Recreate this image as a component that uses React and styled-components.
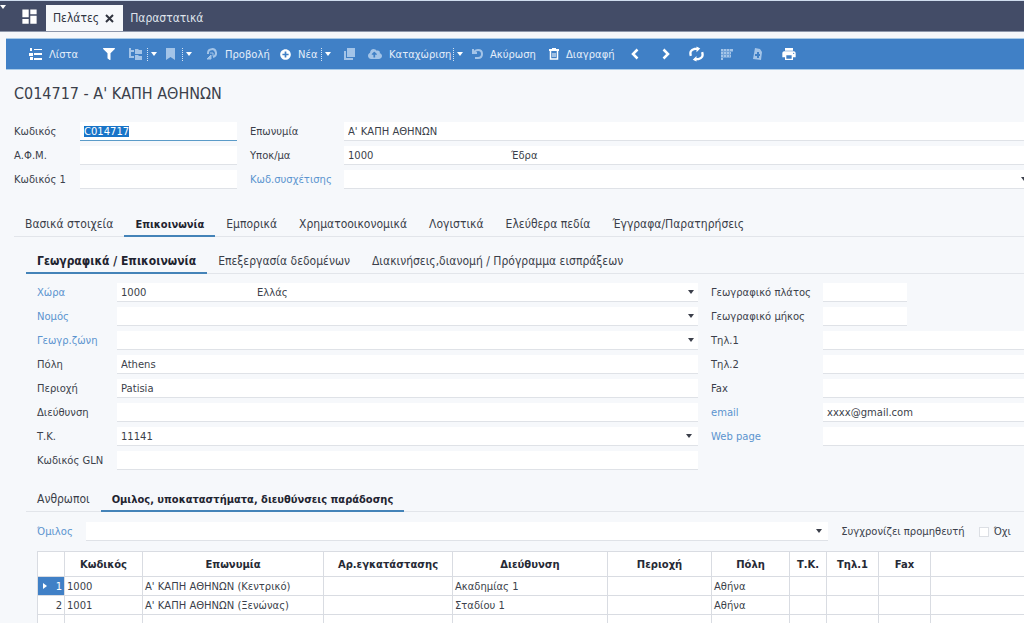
import React, {useEffect, useRef} from 'react';
import styled, {createGlobalStyle, css} from 'styled-components';
import {MdDashboard, MdPrint} from 'react-icons/md';
import {FaFilter, FaPlusCircle, FaCloudUploadAlt} from 'react-icons/fa';

const GlobalStyle = createGlobalStyle`
  * {
    box-sizing: border-box;
  }

  body {
    margin: 0;
    overflow: hidden;
    background: #f6f8fb;
    color: #3b3f4a;
    font-family: "DejaVu Sans", Verdana, sans-serif;
    font-size: 10px;
  }

  button, input, select {
    margin: 0;
    padding: 0;
    border: 0;
    border-radius: 0;
    background: transparent;
    color: inherit;
    font: inherit;
    outline: none;
  }
`;

const Page = styled.div`
  height: 100vh;
  overflow: hidden;
  border-top: 1px solid #cfdcee;
`;

const TopBar = styled.header`
  display: flex;
  align-items: flex-end;
  height: 31px;
  background: #434c67;
  border-bottom: 1px solid #8d97ab;
`;

const MenuCorner = styled.button`
  align-self: flex-start;
  display: flex;
  width: 20px;
  padding-top: 4px;
  color: white;
`;

const HomeButton = styled.button`
  display: flex;
  align-items: center;
  width: 26px;
  height: 30px;
  color: white;
`;

const WindowTab = styled.button`
  display: flex;
  align-items: center;
  gap: 6px;
  height: 26px;
  padding: 0 9px 0 7px;
  font-family: "DejaVu Sans Condensed", "DejaVu Sans", sans-serif;
  font-size: 12px;
  color: ${({$active}) => ($active ? '#30343f' : '#dfe3ec')};
  background: ${({$active}) => ($active ? '#f6f8fb' : 'transparent')};
`;

const Toolbar = styled.div`
  display: flex;
  align-items: center;
  height: 32px;
  margin: 6px 0 0 6px;
  padding-left: 23px;
  background: #4080c6;
  border: solid #a9cbe8;
  border-width: 1px 0;
`;

const ToolButton = styled.button`
  display: flex;
  align-items: center;
  gap: 7px;
  flex: 0 0 ${({$width}) => $width}px;
  height: 30px;
  color: #e4eefa;
  white-space: nowrap;

  svg {
    flex: none;
    color: ${({$dim}) => ($dim ? '#a3c4e8' : 'white')};
  }
`;

const SplitButton = styled.button`
  display: flex;
  align-items: center;
  flex: 0 0 ${({$width}) => $width}px;
  height: 13px;
  padding-left: 3px;
  border-left: 1px dotted #d3e3f4;
  color: white;
`;

const Title = styled.h1`
  margin: 14px 14px 18px;
  font-family: "DejaVu Sans Condensed", "DejaVu Sans", sans-serif;
  font-size: 16px;
  line-height: 20px;
  font-weight: normal;
`;

const HeadForm = styled.div`
  display: grid;
  grid-template-columns: 223px 1fr;
  column-gap: 13px;
  padding-left: 14px;
`;

const FieldColumn = styled.div`
  display: flex;
  flex-direction: column;
  gap: 5px;
  min-width: 0;
`;

const FieldRow = styled.div`
  display: grid;
  grid-template-columns: ${({$label}) => $label}px ${({$width}) => ($width ? `${$width}px` : '1fr')};
  align-items: center;
  height: 19px;
`;

const Label = styled.label`
  white-space: nowrap;
  color: ${({$link}) => ($link ? '#5b94cf' : '#3b3f4a')};
`;

const fieldBox = css`
  width: 100%;
  min-width: 0;
  height: 19px;
  padding: 0 4px;
  background: white;
  border-bottom: 1px solid #dfe2e7;
`;

const TextInput = styled.input`
  ${fieldBox}

  &:focus {
    border-bottom-color: #5b9bc8;
  }

  &::selection {
    background: #1874c8;
    color: white;
  }
`;

const Combo = styled.div`
  position: relative;
  min-width: 0;
  flex: 1;

  svg {
    position: absolute;
    top: 7px;
    right: ${({$arrow}) => $arrow}px;
    pointer-events: none;
  }
`;

const Select = styled.select`
  ${fieldBox}
  display: block;
  appearance: none;
`;

const Description = styled.span`
  position: absolute;
  top: 0;
  left: ${({$left}) => $left}px;
  line-height: 19px;
  pointer-events: none;
`;

const Tabs = styled.div`
  display: flex;
  height: 24px;
  margin-top: ${({$top}) => $top}px;
  margin-left: ${({$left}) => $left}px;
  border-bottom: 1px solid #e2e5ea;
`;

const Tab = styled.button`
  height: 24px;
  padding: 0 11px;
  border-bottom: 2px solid ${({$active}) => ($active ? '#4483b8' : 'transparent')};
  font-family: "DejaVu Sans Condensed", "DejaVu Sans", sans-serif;
  font-size: ${({$compact}) => ($compact ? 11 : 12)}px;
  font-weight: ${({$active}) => ($active ? 'bold' : 'normal')};
  color: ${({$active}) => ($active ? '#1f2430' : '#3b3f4a')};
  white-space: nowrap;
`;

const ContactForm = styled.div`
  display: grid;
  grid-template-columns: 661px 1fr;
  column-gap: 13px;
  margin-top: 9px;
  padding-left: 37px;
`;

const GroupRow = styled.div`
  display: flex;
  align-items: center;
  margin-top: 10px;
  padding: 0 13px 0 37px;
`;

const GroupLabel = styled(Label)`
  width: 49px;
`;

const SyncLabel = styled.span`
  margin: 0 14px 0 13px;
`;

const CheckLabel = styled.label`
  display: flex;
  align-items: center;
  gap: 5px;
`;

const Checkbox = styled.input`
  appearance: none;
  width: 10px;
  height: 10px;
  background: white;
  border: 1px solid #dcdfe4;
`;

const Table = styled.table`
  width: calc(100% - 37px);
  margin: 10px 0 0 37px;
  border-collapse: collapse;
  table-layout: fixed;
  background: white;

  th, td {
    border: 1px solid #d9dce2;
    white-space: nowrap;
    overflow: hidden;
  }

  th:last-child, td:last-child {
    border-right: 0;
  }

  th {
    height: 25px;
    padding: 0;
    color: #262a35;
  }

  td {
    height: 19px;
    padding: 0 2px;
  }
`;

const RowNumber = styled.td`
  text-align: right;
  color: ${({$selected}) => ($selected ? 'white' : '#3b3f4a')};
  background: ${({$selected}) => ($selected ? '#4080c6' : 'white')};
`;

const NumberBox = styled.div`
  display: flex;
  align-items: center;
  justify-content: space-between;
  padding-left: 3px;
`;

const Caret = () => (
  <svg width="6" height="4" viewBox="0 0 6 4" aria-hidden="true">
    <path d="M0 0h6L3 4z" fill="currentColor" />
  </svg>
);

const ListIcon = () => (
  <svg width="13" height="12" viewBox="0 0 13 12" fill="currentColor">
    <path d="M1 0h2v3H1zM5 1h8v1H5zM0 5h4v3H0zM5 5h8v2H5zM1 9h3v3H1zM5 10h8v2H5z" />
  </svg>
);

const TreeIcon = () => (
  <svg width="13" height="12" viewBox="0 0 13 12" fill="currentColor">
    <path d="M0 0h2v2h3v2H2v4h3v2H0zM6 1h3l1 1h3v4H6zM6 7h3l1 1h3v4H6z" />
  </svg>
);

const BookmarkIcon = () => (
  <svg width="9" height="12" viewBox="0 0 9 12" fill="currentColor">
    <path d="M0 0h9v12L4.500 9 0 12z" />
  </svg>
);

const ShowIcon = () => (
  <svg width="12" height="12" viewBox="0 0 12 12" fill="none" stroke="currentColor" strokeWidth="2">
    <path d="M2 6V5a4 4 0 1 1 5 4" />
    <path d="M1 11h4V7z" fill="currentColor" strokeWidth="1" />
    <path d="M4 5h3v3" strokeWidth="1" />
  </svg>
);

const CopyIcon = () => (
  <svg width="11" height="12" viewBox="0 0 11 12" fill="currentColor">
    <path d="M3 0h8v9H3zM0 3h2v7h7v2H0z" />
  </svg>
);

const UndoIcon = () => (
  <svg width="11" height="12" viewBox="0 0 11 12" fill="none" stroke="currentColor" strokeWidth="2">
    <path d="M1 1v4h4M2 4q2-2 4-2 4 0 4 4t-4 4H3" />
  </svg>
);

const TrashIcon = () => (
  <svg width="10" height="12" viewBox="0 0 10 12" fill="none" stroke="currentColor">
    <path d="M0 2h10" strokeWidth="2" />
    <path d="M3 .500h4" />
    <path d="M1.500 3v8h7V3" strokeWidth="1.500" />
    <path d="M4 5v4M6 5v4" />
  </svg>
);

const ChevronIcon = ({right}) => (
  <svg width="8" height="12" viewBox="0 0 8 12" fill="none" stroke="currentColor" strokeWidth="2.500">
    <path d={right ? 'M1.500 1.500L6 6l-4.500 4.500' : 'M6.500 1.500L2 6l4.500 4.500'} />
  </svg>
);

const RefreshIcon = () => (
  <svg width="15" height="16" viewBox="0 0 16 16" fill="none" stroke="currentColor" strokeWidth="2.500">
    <path d="M2 10Q0 4 6 2.500h4M14 6q2 6-4 7.500H6" />
    <path d="M8 0l4 2-4 4zM8 16l-4-2 4-4z" fill="currentColor" stroke="none" />
  </svg>
);

const GridIcon = () => (
  <svg width="12" height="11" viewBox="0 0 12 11">
    <path d="M0 0h12v3h-2v6H2v2H0z" fill="currentColor" opacity="0.5" />
    <path d="M0 0h2v2H0zM3 0h2v2H3zM6 0h2v2H6zM9 0h3v2H9zM0 3h2v2H0zM3 3h2v2H3zM6 3h2v2H6zM9 3h1v2H9zM0 6h2v2H0zM3 6h2v2H3zM6 6h2v2H6zM9 6h1v2H9zM0 9h2v2H0z" fill="currentColor" />
  </svg>
);

const DocumentIcon = () => (
  <svg width="10" height="12" viewBox="0 0 10 12" fill="currentColor" fillRule="evenodd">
    <path d="M2 0l5 1 2 3-1 8-8-1zM4 4v2H2v2h2v2h2V8h1V6H6V4z" />
  </svg>
);

const mainTabs = ['Βασικά στοιχεία', 'Επικοινωνία', 'Εμπορικά', 'Χρηματοοικονομικά', 'Λογιστικά', 'Ελεύθερα πεδία', 'Έγγραφα/Παρατηρήσεις'];
const contactTabs = ['Γεωγραφικά / Επικοινωνία', 'Επεξεργασία δεδομένων', 'Διακινήσεις,διανομή / Πρόγραμμα εισπράξεων'];
const groupTabs = ['Ανθρωποι', 'Ομιλος, υποκαταστήματα, διευθύνσεις παράδοσης'];

const addressFields = [
  {id: 'country', label: 'Χώρα', value: '1000', description: 'Ελλάς', link: true, arrow: 4},
  {id: 'county', label: 'Νομός', link: true, arrow: 4},
  {id: 'zone', label: 'Γεωγρ.ζώνη', link: true, arrow: 4},
  {id: 'city', label: 'Πόλη', value: 'Athens'},
  {id: 'area', label: 'Περιοχή', value: 'Patisia'},
  {id: 'address', label: 'Διεύθυνση'},
  {id: 'zip', label: 'Τ.Κ.', value: '11141', arrow: 6},
  {id: 'gln', label: 'Κωδικός GLN'},
];

const contactFields = [
  {id: 'latitude', label: 'Γεωγραφικό πλάτος', width: 84},
  {id: 'longitude', label: 'Γεωγραφικό μήκος', width: 84},
  {id: 'phone1', label: 'Τηλ.1'},
  {id: 'phone2', label: 'Τηλ.2'},
  {id: 'fax', label: 'Fax'},
  {id: 'email', label: 'email', value: 'xxxx@gmail.com', link: true},
  {id: 'web', label: 'Web page', link: true},
];

const columns = [
  {title: '', width: 27},
  {title: 'Κωδικός', width: 78},
  {title: 'Επωνυμία', width: 181},
  {title: 'Αρ.εγκατάστασης', width: 129},
  {title: 'Διεύθυνση', width: 155},
  {title: 'Περιοχή', width: 104},
  {title: 'Πόλη', width: 78},
  {title: 'Τ.Κ.', width: 37},
  {title: 'Τηλ.1', width: 52},
  {title: 'Fax', width: 52},
  {title: ''},
];

const branches = [
  {number: 1, cells: ['1000', "Α' ΚΑΠΗ ΑΘΗΝΩΝ (Κεντρικό)", '', 'Ακαδημίας 1', '', 'Αθήνα', '', '', '', ''], selected: true},
  {number: 2, cells: ['1001', "Α' ΚΑΠΗ ΑΘΗΝΩΝ (Ξενώνας)", '', 'Σταδίου 1', '', 'Αθήνα', '', '', '', '']},
  {number: '', cells: ['', '', '', '', '', '', '', '', '', '']},
];

const ComboBox = ({id, value = '', description, arrow, left = 140}) => (
  <Combo $arrow={arrow}>
    <Select id={id} defaultValue={value}>
      <option value={value}>{value}</option>
    </Select>
    {description && <Description $left={left}>{description}</Description>}
    <Caret />
  </Combo>
);

const Field = ({id, label, labelWidth, value = '', description, link, arrow, width}) => (
  <FieldRow $label={labelWidth} $width={width}>
    <Label htmlFor={id} $link={link}>{label}</Label>
    {arrow ? (
      <ComboBox id={id} value={value} description={description} arrow={arrow} />
    ) : (
      <TextInput id={id} defaultValue={value} />
    )}
  </FieldRow>
);

const TabStrip = ({tabs, active, top, left, compact}) => (
  <Tabs role="tablist" $top={top} $left={left}>
    {tabs.map((tab, index) => (
      <Tab
        key={tab}
        role="tab"
        aria-selected={index === active}
        $active={index === active}
        $compact={compact && index === active}
      >
        {tab}
      </Tab>
    ))}
  </Tabs>
);

const App = () => {
  const codeRef = useRef(null);

  useEffect(() => {
    codeRef.current.focus();
    codeRef.current.select();
  }, []);

  return (
    <Page>
      <GlobalStyle />
      <TopBar>
        <MenuCorner aria-label="Μενού"><Caret /></MenuCorner>
        <HomeButton aria-label="Αρχική"><MdDashboard size={19} /></HomeButton>
        <WindowTab $active>
          Πελάτες
          <svg width="9" height="9" viewBox="0 0 9 9" stroke="currentColor" strokeWidth="2">
            <path d="M1 1l7 7M8 1L1 8" />
          </svg>
        </WindowTab>
        <WindowTab>Παραστατικά</WindowTab>
      </TopBar>

      <Toolbar>
        <ToolButton $width={74}><ListIcon />Λίστα</ToolButton>
        <ToolButton $width={26} aria-label="Φίλτρο"><FaFilter size={12} /></ToolButton>
        <ToolButton $width={18} $dim aria-label="Δομή"><TreeIcon /></ToolButton>
        <SplitButton $width={19} aria-label="Επιλογές δομής"><Caret /></SplitButton>
        <ToolButton $width={16} $dim aria-label="Σελιδοδείκτης"><BookmarkIcon /></ToolButton>
        <SplitButton $width={24} aria-label="Επιλογές σελιδοδείκτη"><Caret /></SplitButton>
        <ToolButton $width={74} $dim><ShowIcon />Προβολή</ToolButton>
        <ToolButton $width={41}><FaPlusCircle size={11} />Νέα</ToolButton>
        <SplitButton $width={23} aria-label="Επιλογές νέας εγγραφής"><Caret /></SplitButton>
        <ToolButton $width={24} $dim aria-label="Αντιγραφή"><CopyIcon /></ToolButton>
        <ToolButton $width={85} $dim><FaCloudUploadAlt size={14} />Καταχώριση</ToolButton>
        <SplitButton $width={19} aria-label="Επιλογές καταχώρισης"><Caret /></SplitButton>
        <ToolButton $width={77} $dim><UndoIcon />Ακύρωση</ToolButton>
        <ToolButton $width={82}><TrashIcon />Διαγραφή</ToolButton>
        <ToolButton $width={31} aria-label="Προηγούμενο"><ChevronIcon /></ToolButton>
        <ToolButton $width={27} aria-label="Επόμενο"><ChevronIcon right /></ToolButton>
        <ToolButton $width={32} aria-label="Ανανέωση"><RefreshIcon /></ToolButton>
        <ToolButton $width={32} $dim aria-label="Πλέγμα"><GridIcon /></ToolButton>
        <ToolButton $width={28} $dim aria-label="Έγγραφο"><DocumentIcon /></ToolButton>
        <ToolButton $width={20} aria-label="Εκτύπωση"><MdPrint size={16} /></ToolButton>
      </Toolbar>

      <Title>C014717 - Α' ΚΑΠΗ ΑΘΗΝΩΝ</Title>

      <HeadForm>
        <FieldColumn>
          <FieldRow $label={66}>
            <Label htmlFor="code">Κωδικός</Label>
            <TextInput id="code" ref={codeRef} defaultValue="C014717" />
          </FieldRow>
          <Field id="vat" label="Α.Φ.Μ." labelWidth={66} />
          <Field id="code1" label="Κωδικός 1" labelWidth={66} />
        </FieldColumn>
        <FieldColumn>
          <Field id="name" label="Επωνυμία" labelWidth={94} value="Α' ΚΑΠΗ ΑΘΗΝΩΝ" />
          <FieldRow $label={94}>
            <Label htmlFor="branch">Υποκ/μα</Label>
            <Combo>
              <TextInput id="branch" defaultValue="1000" />
              <Description $left={167}>Έδρα</Description>
            </Combo>
          </FieldRow>
          <Field id="relation" label="Κωδ.συσχέτισης" labelWidth={94} link arrow={-3} />
        </FieldColumn>
      </HeadForm>

      <TabStrip tabs={mainTabs} active={1} top={24} left={14} compact />
      <TabStrip tabs={contactTabs} active={0} top={13} left={26} />

      <ContactForm>
        <FieldColumn>
          {addressFields.map((field) => (
            <Field key={field.id} labelWidth={80} {...field} />
          ))}
        </FieldColumn>
        <FieldColumn>
          {contactFields.map((field) => (
            <Field key={field.id} labelWidth={112} {...field} />
          ))}
        </FieldColumn>
      </ContactForm>

      <TabStrip tabs={groupTabs} active={1} top={18} left={26} compact />

      <GroupRow>
        <GroupLabel htmlFor="group" $link>Όμιλος</GroupLabel>
        <ComboBox id="group" arrow={6} />
        <SyncLabel id="sync-label">Συγχρονίζει προμηθευτή</SyncLabel>
        <CheckLabel>
          <Checkbox type="checkbox" aria-describedby="sync-label" />
          Όχι
        </CheckLabel>
      </GroupRow>

      <Table>
        <colgroup>
          {columns.map((column, index) => (
            <col key={index} width={column.width} />
          ))}
        </colgroup>
        <thead>
          <tr>
            {columns.map((column, index) => (
              <th key={index}>{column.title}</th>
            ))}
          </tr>
        </thead>
        <tbody>
          {branches.map((branch, index) => (
            <tr key={index}>
              <RowNumber $selected={branch.selected}>
                <NumberBox>
                  <svg width="4" height="6" viewBox="0 0 4 6">
                    {branch.selected && <path d="M0 0l4 3-4 3z" fill="white" />}
                  </svg>
                  {branch.number}
                </NumberBox>
              </RowNumber>
              {branch.cells.map((cell, cellIndex) => (
                <td key={cellIndex}>{cell}</td>
              ))}
            </tr>
          ))}
        </tbody>
      </Table>
    </Page>
  );
};

export default App;
